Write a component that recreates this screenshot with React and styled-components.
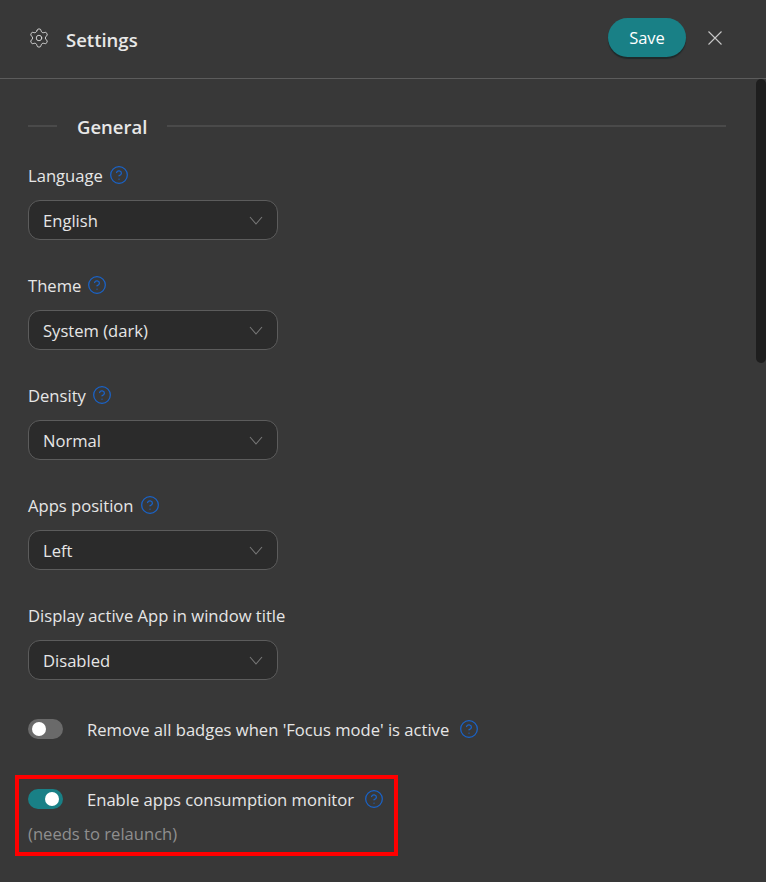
import React from 'react';
import styled, { createGlobalStyle } from 'styled-components';
import { Settings, CircleHelp } from 'lucide-react';

const Global = createGlobalStyle`
  html, body {
    margin: 0;
    padding: 0;
    background: #383838;
    overflow: hidden;
  }
  * { box-sizing: border-box; }
`;

const Page = styled.div`
  position: relative;
  width: 766px;
  height: 882px;
  overflow: hidden;
  background: #383838;
  color: #e6e6e6;
  font-family: "Open Sans", "Noto Sans", sans-serif;
`;

const Header = styled.header`
  height: 79px;
  padding: 0 43px 2px 28px;
  display: flex;
  align-items: center;
  border-bottom: 1px solid #5c5c5c;
`;

const Title = styled.h1`
  margin: 2px 0 0 16px;
  flex: 1;
  font-size: 18.5px;
  font-weight: 600;
  color: #e8e8e8;
`;

const SaveButton = styled.button`
  width: 78px;
  height: 39px;
  margin: 0 21px 1px 0;
  padding: 0;
  border: none;
  border-radius: 20px;
  background: #198086;
  box-shadow: 0 2px 1px #1f2a2b;
  color: #fff;
  font-family: inherit;
  font-size: 16.5px;
`;

const CloseButton = styled.button`
  width: 16px;
  height: 16px;
  padding: 0;
  border: none;
  background: none;
  display: flex;
`;

const Scrollbar = styled.div`
  position: absolute;
  top: 79px;
  right: 0;
  width: 10px;
  height: 284px;
  border-radius: 5px;
  background: #1e1e1e;
`;

const Content = styled.main`
  padding: 33px 40px 0 28px;
`;

const SectionTitle = styled.div`
  display: flex;
  align-items: center;
  gap: 20px;
  height: 28px;
  margin-bottom: 23px;
  font-size: 18.5px;
  font-weight: 600;
  color: #e8e8e8;

  &::before {
    content: "";
    width: 29px;
    height: 2px;
    background: #4a4a4a;
  }
  &::after {
    content: "";
    flex: 1;
    height: 2px;
    background: #4a4a4a;
  }
`;

const Field = styled.div`
  height: 110px;
`;

const Label = styled.div`
  display: flex;
  align-items: center;
  gap: 6px;
  height: 24px;
  margin-bottom: 13px;
  font-size: 16.6px;
  color: #e6e6e6;
`;

const Select = styled.div`
  width: 250px;
  height: 40px;
  padding: 0 14px;
  display: flex;
  align-items: center;
  justify-content: space-between;
  border: 1px solid #5c5c5c;
  border-radius: 12px;
  background: #2b2b2b;
  font-size: 16.6px;
  color: #e6e6e6;
`;

const ToggleGroup = styled.div`
  padding-top: 4px;
`;

const ToggleRow = styled.div`
  display: flex;
  align-items: center;
  height: 24px;
  font-size: 16.6px;
  color: #e6e6e6;
`;

const Track = styled.span`
  width: 35px;
  height: 20px;
  margin-right: 24px;
  padding: 0 4px;
  border-radius: 10px;
  display: flex;
  align-items: center;
  justify-content: ${({ $on }) => ($on ? 'flex-end' : 'flex-start')};
  background: ${({ $on }) => ($on ? '#198086' : '#6a6a6a')};

  &::after {
    content: "";
    width: 14px;
    height: 14px;
    border-radius: 50%;
    background: #fff;
  }
`;

const HelpIcon = styled(CircleHelp)`
  flex: none;
  width: 20px;
  height: 20px;
  margin-left: ${({ $gap }) => $gap || 0}px;
  color: #1a63c8;
  stroke-width: 1.5;
`;

const Highlight = styled.div`
  width: 383px;
  height: 81px;
  margin: 34px 0 0 -13px;
  padding: 8px 0 0 9px;
  border: 4px solid #ff0000;
`;

const Note = styled.div`
  margin-top: 11px;
  font-size: 16.6px;
  color: #8f8f8f;
`;

const Chevron = () => (
  <svg width="14" height="9" viewBox="0 0 14 9" fill="none" stroke="#787878" strokeWidth="1.1">
    <path d="M1 1l6 7 6-7" />
  </svg>
);

const fields = [
  { label: 'Language', value: 'English', help: true },
  { label: 'Theme', value: 'System (dark)', help: true },
  { label: 'Density', value: 'Normal', help: true },
  { label: 'Apps position', value: 'Left', help: true },
  { label: 'Display active App in window title', value: 'Disabled', help: false },
];

export default function App() {
  return (
    <Page>
      <Global />
      <Header>
        <Settings size={22} strokeWidth={1} color="#dcdcdc" />
        <Title>Settings</Title>
        <SaveButton>Save</SaveButton>
        <CloseButton aria-label="Close">
          <svg width="16" height="16" viewBox="0 0 16 16" fill="none" stroke="#c8c8c8" strokeWidth="1.1">
            <path d="M1.5 1.5l13 13M14.5 1.5l-13 13" />
          </svg>
        </CloseButton>
      </Header>
      <Scrollbar />
      <Content>
        <SectionTitle>General</SectionTitle>
        {fields.map((field) => (
          <Field key={field.label}>
            <Label>
              {field.label}
              {field.help && <HelpIcon />}
            </Label>
            <Select>
              {field.value}
              <Chevron />
            </Select>
          </Field>
        ))}
        <ToggleGroup>
          <ToggleRow>
            <Track />
            Remove all badges when 'Focus mode' is active
            <HelpIcon $gap={10} />
          </ToggleRow>
          <Highlight>
            <ToggleRow>
              <Track $on />
              Enable apps consumption monitor
              <HelpIcon $gap={10} />
            </ToggleRow>
            <Note>(needs to relaunch)</Note>
          </Highlight>
        </ToggleGroup>
      </Content>
    </Page>
  );
}
